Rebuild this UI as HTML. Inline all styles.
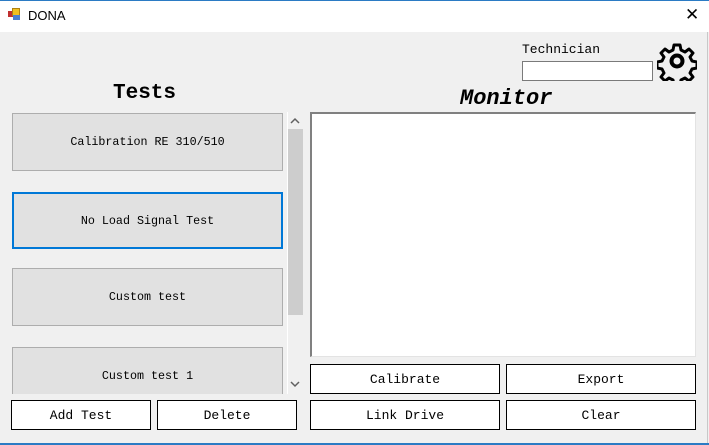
<html><head><style>
body{margin:0;width:709px;height:445px;background:#f0f0f0;position:relative;overflow:hidden;font-family:"Liberation Mono",monospace;font-size:13px;color:#000}
.a{position:absolute;box-sizing:border-box}
.t{background:#e1e1e1;border:1px solid #adadad;display:flex;align-items:center;justify-content:center;font-size:11.7px}
.b{background:#fff;border:1px solid #000;display:flex;align-items:center;justify-content:center}
</style></head><body>
<div class="a" style="left:0;top:0;width:709px;height:32px;background:#fff;border-top:1px solid #2b7bc4"></div>
<div class="a" style="left:8px;top:11px;width:6px;height:6px;background:#c03030"></div>
<div class="a" style="left:12px;top:8px;width:8px;height:8px;background:#f0c020;border:1px solid #b08010"></div>
<div class="a" style="left:13px;top:15px;width:7px;height:5px;background:#4a80d0"></div>
<div class="a" style="left:28px;top:8px;font-family:'Liberation Sans',sans-serif;font-size:13px">DONA</div>
<div class="a" style="left:685px;top:5px;font-family:'Liberation Sans',sans-serif;font-size:17px;font-weight:300">✕</div>
<div class="a" style="left:707px;top:32px;width:1px;height:413px;background:#c8c8c8"></div>
<div class="a" style="left:0;top:443px;width:709px;height:2px;background:#2b7bc4"></div>
<div class="a" style="left:522px;top:42px;font-size:13px">Technician</div>
<div class="a" style="left:522px;top:61px;width:131px;height:20px;background:#fff;border:1px solid #7a7a7a"></div>
<svg class="a" style="left:657px;top:41px" width="40" height="40" viewBox="0 0 40 40"><g fill="none" stroke="#000" stroke-width="3"><path d="M17 4h6l1 5 4 2 4-3 4 4-3 4 2 4 5 1v6l-5 1-2 4 3 4-4 4-4-3-4 2-1 5h-6l-1-5-4-2-4 3-4-4 3-4-2-4-5-1v-6l5-1 2-4-3-4 4-4 4 3 4-2z" stroke-linejoin="round"/><circle cx="20" cy="20" r="5.5" stroke-width="4"/></g></svg>
<div class="a" style="left:113px;top:82px;font-size:21px;font-weight:bold">Tests</div>
<div class="a" style="left:460px;top:86px;font-size:22px;font-weight:bold;font-style:italic">Monitor</div>
<div class="a" style="left:0;top:112px;width:304px;height:282px;overflow:hidden">
<div class="a t" style="left:12px;top:1px;width:271px;height:58px">Calibration RE 310/510</div>
<div class="a t" style="left:12px;top:80px;width:271px;height:57px;border:2px solid #0078d7">No Load Signal Test</div>
<div class="a t" style="left:12px;top:156px;width:271px;height:58px">Custom test</div>
<div class="a t" style="left:12px;top:235px;width:271px;height:58px">Custom test 1</div>
<div class="a" style="left:287px;top:0;width:1px;height:282px;background:#fff"></div>
<div class="a" style="left:288px;top:17px;width:15px;height:186px;background:#cdcdcd"></div>
<svg class="a" style="left:290px;top:5px" width="10" height="8"><path d="M1 6l4-4 4 4" fill="none" stroke="#606060" stroke-width="1.5"/></svg>
<svg class="a" style="left:290px;top:268px" width="10" height="8"><path d="M1 2l4 4 4-4" fill="none" stroke="#606060" stroke-width="1.5"/></svg>
</div>
<div class="a" style="left:310px;top:112px;width:386px;height:245px;background:#fff;border:1px solid #e3e3e3;border-top:2px solid #808080;border-left:2px solid #808080"></div>
<div class="a b" style="left:310px;top:364px;width:190px;height:30px">Calibrate</div>
<div class="a b" style="left:506px;top:364px;width:190px;height:30px">Export</div>
<div class="a b" style="left:11px;top:400px;width:140px;height:30px">Add Test</div>
<div class="a b" style="left:157px;top:400px;width:140px;height:30px">Delete</div>
<div class="a b" style="left:310px;top:400px;width:190px;height:30px">Link Drive</div>
<div class="a b" style="left:506px;top:400px;width:190px;height:30px">Clear</div>
</body></html>
